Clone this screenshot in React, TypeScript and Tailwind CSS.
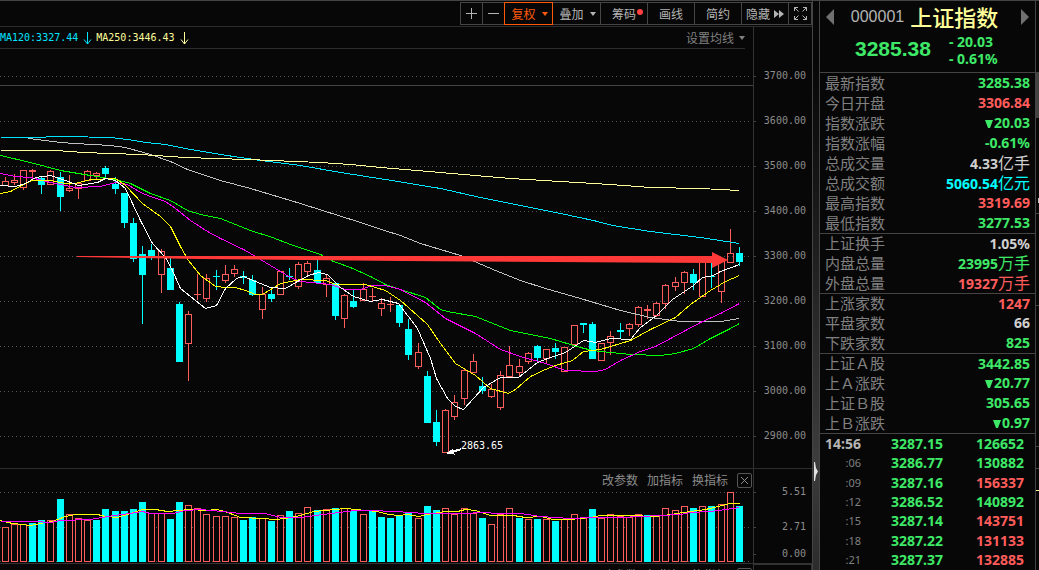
import type { ReactNode } from "react";
import clsx from "clsx";

// kind, high, body top, body bottom, low
type Candle = ["r" | "c", number, number, number, number];

const candles: Candle[] = [
  ["r", 177, 181, 185, 185], ["r", 174, 180, 182, 185], ["r", 170, 170, 187, 190],
  ["r", 169, 170, 171, 177], ["c", 177, 178, 185, 194], ["r", 170, 171, 184, 184],
  ["c", 172, 177, 197, 211], ["r", 175, 188, 190, 192], ["r", 183, 183, 188, 199],
  ["r", 170, 171, 180, 180], ["r", 172, 173, 175, 180], ["c", 166, 168, 174, 178],
  ["c", 177, 184, 189, 194], ["c", 193, 193, 223, 228], ["c", 218, 223, 259, 262],
  ["c", 246, 254, 275, 324], ["c", 244, 250, 257, 260], ["r", 249, 251, 274, 293],
  ["c", 258, 268, 290, 290], ["c", 302, 304, 362, 362], ["r", 311, 314, 343, 381],
  ["r", 274, 294, 294, 300], ["r", 274, 278, 298, 302], ["c", 270, 276, 277, 290],
  ["r", 265, 274, 280, 283], ["r", 265, 269, 273, 277], ["c", 271, 276, 278, 284],
  ["c", 275, 280, 295, 296], ["r", 287, 294, 309, 319], ["c", 288, 294, 299, 302],
  ["r", 271, 271, 294, 294], ["c", 268, 276, 277, 280], ["r", 262, 264, 286, 289],
  ["r", 261, 263, 271, 276], ["c", 260, 270, 283, 283], ["r", 275, 278, 284, 297],
  ["c", 282, 283, 316, 320], ["r", 294, 295, 318, 328], ["c", 290, 301, 307, 308],
  ["r", 283, 289, 300, 301], ["r", 288, 296, 296, 302], ["r", 298, 303, 308, 316],
  ["r", 297, 304, 304, 312], ["c", 305, 305, 323, 327], ["c", 319, 329, 355, 360],
  ["r", 343, 352, 366, 369], ["c", 371, 376, 423, 423], ["c", 410, 422, 442, 446],
  ["r", 409, 410, 452, 452], ["r", 395, 402, 416, 420], ["r", 368, 370, 398, 405],
  ["r", 354, 361, 372, 372], ["c", 377, 386, 391, 394], ["r", 384, 389, 396, 398],
  ["r", 371, 375, 407, 410], ["r", 346, 365, 376, 376], ["r", 359, 366, 372, 376],
  ["r", 352, 353, 361, 364], ["c", 345, 346, 358, 361], ["r", 349, 349, 358, 364],
  ["c", 343, 348, 352, 359], ["r", 347, 347, 371, 371], ["r", 325, 325, 344, 344],
  ["c", 323, 323, 325, 333], ["c", 322, 324, 359, 359], ["r", 343, 343, 360, 360],
  ["r", 331, 336, 342, 355], ["c", 323, 330, 332, 339], ["r", 323, 324, 328, 336],
  ["r", 306, 307, 324, 327], ["r", 305, 309, 310, 319], ["r", 302, 303, 315, 317],
  ["r", 284, 285, 303, 309], ["r", 277, 282, 286, 291], ["r", 271, 272, 282, 294],
  ["c", 269, 274, 283, 290], ["r", 260, 260, 296, 296], ["c", 262, 276, 277, 288],
  ["r", 260, 260, 291, 303], ["r", 229, 253, 262, 262], ["c", 247, 253, 262, 266],
];

const volumeTops = [
  527, 524, 524, 523, 520, 520, 499, 514, 518, 520, 520, 509, 511, 511, 509, 502, 513, 513, 519, 502,
  505, 508, 514, 516, 516, 517, 520, 517, 518, 521, 515, 511, 513, 507, 510, 509, 508, 508, 511, 514,
  510, 517, 518, 515, 513, 518, 506, 510, 508, 514, 508, 513, 518, 524, 514, 508, 518, 519, 519, 519,
  521, 519, 514, 518, 509, 518, 514, 516, 517, 514, 515, 516, 508, 510, 506, 508, 506, 506, 504, 492,
  506,
];
const volumeKinds = "rrrccrcrrrccccccrrccrrrrrrccrcrcrrcrcrcrcccccrccrrrrcrrrcrcrcrrrcrrrrrcrrrrcrcrrc";

const priceLines = [
  { color: "#c0c0c0", points: "28,138 60,142 75,143 110,145 125,147 150,154 170,161 187,169 220,180 250,188 300,203 360,222 384,230 400,235 420,243 460,255 495,270 520,280 545,288 580,298 600,304 620,310 650,317 680,321 720,321 739,318" },
  { color: "#00e5ff", points: "0,137 45,137 46,136 65,136 110,137 127,139 145,142 165,144 190,149 220,154 260,160 300,165 340,172 385,179 440,188 480,197 520,205 560,213 593,220 612,225 650,231 700,237 739,243" },
  { color: "#ffff9a", points: "0,150 55,150 83,152 110,153 140,154 185,157 247,159 320,162 350,164 380,167 440,172 510,178 560,181 610,184 650,187 700,188 739,190" },
  { color: "#00ff00", points: "0,155 30,162 60,170 90,175 115,179 130,183 150,193 170,200 187,210 200,214 220,218 250,230 272,237 290,244 320,254 333,261 350,267 370,276 385,284 400,289 425,297 440,309 447,311 475,316 510,330 550,338 580,347 592,350 610,352 630,354 660,355 675,353 693,348 710,338 730,328 739,323" },
  { color: "#ff00ff", points: "0,173 15,176 30,177 50,182 75,187 100,186 115,182 127,184 140,192 150,196 165,201 175,208 190,220 207,231 220,238 245,250 270,265 290,277 300,281 330,284 345,289 360,289 372,285 385,285 400,289 425,302 445,318 475,333 500,349 520,356 545,363 565,370 595,371 605,369 620,360 640,351 655,346 670,338 700,322 720,313 739,303" },
  { color: "#ffff00", points: "0,193 10,191 25,183 32,180 50,180 65,183 75,183 90,179 115,178 125,185 142,203 160,216 170,226 180,246 188,260 200,275 215,286 225,287 235,287 245,290 255,294 262,294 280,283 300,279 325,280 335,284 365,284 385,290 400,300 427,324 440,343 455,363 475,375 490,388 508,393 515,389 530,376 545,369 555,365 572,360 583,351 600,349 630,340 650,329 675,317 690,304 710,290 725,281 739,275" },
  { color: "#ffffff", points: "0,185 15,186 25,183 35,177 50,175 65,180 78,185 97,182 105,178 115,180 125,188 140,220 152,243 165,257 172,270 180,288 190,296 205,308 216,305 225,288 236,278 243,276 255,281 270,287 285,288 297,281 308,275 318,272 327,274 340,287 353,296 370,301 382,299 398,303 417,328 430,358 436,378 447,398 455,406 463,409 483,387 500,377 518,377 537,362 550,357 565,352 583,340 595,342 610,338 630,339 640,327 656,315 672,299 693,285 702,277 713,275 720,271 739,264" },
];

const volumeLines = [
  { color: "#ffff00", points: "0,520 7,522 13,523 30,525 40,523 52,521 65,516 75,514 97,514 105,516 117,517 130,513 142,509 155,509 167,511 178,510 190,509 205,510 217,509 227,512 240,517 262,518 275,519 285,518 300,515 313,511 325,510 345,508 365,510 377,511 388,514 398,515 407,514 418,516 432,513 445,511 457,511 465,509 475,510 490,515 513,515 525,517 540,516 553,519 570,519 590,517 600,515 630,515 655,516 670,514 690,511 705,509 730,503 739,503" },
  { color: "#ff00ff", points: "0,521 35,521 50,522 60,520 90,519 113,515 130,513 142,511 150,513 172,513 185,510 200,509 222,511 240,513 265,513 280,517 300,517 330,513 355,510 370,510 395,511 410,512 425,513 465,513 480,512 500,513 520,513 540,516 555,517 570,518 590,517 620,517 640,516 660,515 680,514 690,512 710,511 725,509 739,507" },
];

const prices = ["3700.00", "3600.00", "3500.00", "3400.00", "3300.00", "3200.00", "3100.00", "3000.00", "2900.00"];

const tone = {
  g: "text-[#3ee968]",
  r: "text-[#ff5c5c]",
  w: "text-[#d0d0d0]",
  c: "text-[#00ffff]",
};
type Tone = keyof typeof tone;

// label, number, tone, unit
const groups: [string, string, Tone, string?][][] = [
  [
    ["最新指数", "3285.38", "g"],
    ["今日开盘", "3306.84", "r"],
    ["指数涨跌", "▼20.03", "g"],
    ["指数涨幅", "-0.61%", "g"],
    ["总成交量", "4.33", "w", "亿手"],
    ["总成交额", "5060.54", "c", "亿元"],
    ["最高指数", "3319.69", "r"],
    ["最低指数", "3277.53", "g"],
  ],
  [
    ["上证换手", "1.05%", "w"],
    ["内盘总量", "23995", "g", "万手"],
    ["外盘总量", "19327", "r", "万手"],
  ],
  [
    ["上涨家数", "1247", "r"],
    ["平盘家数", "66", "w"],
    ["下跌家数", "825", "g"],
  ],
  [
    ["上证Ａ股", "3442.85", "g"],
    ["上Ａ涨跌", "▼20.77", "g"],
    ["上证Ｂ股", "305.65", "g"],
    ["上Ｂ涨跌", "▼0.97", "g"],
  ],
];

const ticks: [string, string, string, Tone][] = [
  ["14:56", "3287.15", "126652", "g"],
  [":06", "3286.77", "130882", "g"],
  [":09", "3287.16", "156337", "r"],
  [":12", "3286.52", "140892", "g"],
  [":15", "3287.14", "143751", "r"],
  [":18", "3287.22", "131133", "r"],
  [":21", "3287.37", "132885", "r"],
];

const slotX = (i: number) => Math.round(4.5 + 9.18 * i);

function Caret() {
  return (
    <svg width="6" height="4" viewBox="0 0 6 4" fill="currentColor" aria-hidden="true">
      <path d="M0 0h6L3 4z" />
    </svg>
  );
}

function DownArrow() {
  return (
    <svg width="9" height="14" viewBox="0 0 9 14" fill="none" stroke="currentColor" aria-hidden="true">
      <path d="M4.5 1v12M1 8.500l3.500 4.500L8 8.500" />
    </svg>
  );
}

function ToolButton({ label, active, className, children }: { label?: string; active?: boolean; className: string; children?: ReactNode }) {
  return (
    <button
      aria-label={label}
      className={clsx(
        "relative -ml-px flex h-[23px] items-center justify-center border text-xs",
        active ? "z-10 border-[#ff5a0a] text-[#ff5a0a]" : "border-[#454545] text-[#b4b4b4]",
        className
      )}
    >
      {children}
    </button>
  );
}

function Toolbar() {
  return (
    <div className="flex h-[25px] shrink-0 justify-end pt-px">
      <ToolButton label="放大" className="w-[23px]">
        <svg width="11" height="11" viewBox="0 0 11 11" stroke="currentColor"><path d="M0 5.500h11M5.500 0v11" /></svg>
      </ToolButton>
      <ToolButton label="缩小" className="w-[23px]">
        <svg width="11" height="11" viewBox="0 0 11 11" stroke="currentColor"><path d="M0 5.500h11" /></svg>
      </ToolButton>
      <ToolButton active className="w-[49px] gap-1.5 pl-0.5">复权<Caret /></ToolButton>
      <ToolButton className="w-[49px] gap-1.5 pl-0.5">叠加<Caret /></ToolButton>
      <ToolButton className="w-12">
        筹码
        <span className="absolute right-1 top-1.5 size-1.5 rounded-full bg-[#ff4040]" />
      </ToolButton>
      <ToolButton className="w-12">画线</ToolButton>
      <ToolButton className="w-12">简约</ToolButton>
      <ToolButton className="w-12 gap-1">
        隐藏
        <svg width="10" height="8" viewBox="0 0 10 8" fill="currentColor" aria-hidden="true"><path d="M0 0l5 4-5 4zM5 0l5 4-5 4z" /></svg>
      </ToolButton>
      <ToolButton label="全屏" className="w-6">
        <svg width="13" height="13" viewBox="0 0 13 13" fill="none" stroke="currentColor">
          <path d="M.5 4V.5H4M.5.5l4 4M9 .5h3.500V4M12.500.5l-4 4M.5 9v3.500H4M.5 12.500l4-4M9 12.500h3.500V9M12.500 12.500l-4-4" />
        </svg>
      </ToolButton>
    </div>
  );
}

function Grid({ rows }: { rows: number[] }) {
  return (
    <>
      {rows.map((y) => (
        <line key={y} x1="0" x2="751" y1={y + 0.5} y2={y + 0.5} stroke="#555" strokeDasharray="1 3" />
      ))}
    </>
  );
}

function MovingAverages({ lines }: { lines: { color: string; points: string }[] }) {
  return (
    <g transform="translate(0.5 0.5)" fill="none">
      {lines.map((l) => (
        <polyline key={l.color} points={l.points} stroke={l.color} />
      ))}
    </g>
  );
}

function PriceChart() {
  return (
    <svg viewBox="0 49 753 419" preserveAspectRatio="none" shapeRendering="crispEdges" className="block h-[419px] w-full" role="img" aria-label="上证指数 K线">
      <Grid rows={[76, 121, 166, 211, 256, 301, 346, 391, 436]} />
      <rect x="0" y="85" width="753" height="1" fill="#444" />
      {candles.map(([kind, high, top, bottom, low], i) => {
        const x = slotX(i);
        if (kind === "c") {
          return (
            <g key={i} fill="#00ffff">
              <rect x={x} y={high} width="1" height={low - high} />
              <rect x={x - 3} y={top} width="7" height={bottom - top} />
            </g>
          );
        }
        return (
          <g key={i}>
            <rect x={x} y={high} width="1" height={top - high} fill="#ff5c5c" />
            <rect x={x} y={bottom} width="1" height={low - bottom} fill="#ff5c5c" />
            {bottom - top > 1 ? (
              <rect x={x - 2.5} y={top + 0.5} width="6" height={bottom - top} fill="none" stroke="#ff5c5c" />
            ) : (
              <rect x={x - 3} y={top} width="7" height={bottom - top + 1} fill="#ff5c5c" />
            )}
          </g>
        );
      })}
      <MovingAverages lines={priceLines} />
      <path d="M77 256H712V252L728 260 712 268V263L400 261 200 259 77 257z" fill="#ff3838" shapeRendering="auto" />
      <path d="M447 453l5-3v1l8-2v1l-7 2 1 2z" fill="#fff" stroke="#fff" />
      <text x="461" y="449" fill="#fff" className="font-['DejaVu_Sans_Mono',monospace] text-[10px]">2863.65</text>
    </svg>
  );
}

function VolumeChart() {
  return (
    <svg viewBox="0 491 753 72" preserveAspectRatio="none" shapeRendering="crispEdges" className="block h-[72px] w-full" role="img" aria-label="成交量">
      <Grid rows={[492, 527, 561]} />
      {volumeTops.map((top, i) =>
        volumeKinds[i] === "c" ? (
          <rect key={i} x={slotX(i) - 3} y={top} width="7" height={562 - top} fill="#00ffff" />
        ) : (
          <rect key={i} x={slotX(i) - 2.5} y={top + 0.5} width="6" height={561 - top} fill="#070707" stroke="#ff5c5c" />
        )
      )}
      <MovingAverages lines={volumeLines} />
    </svg>
  );
}

function IndicatorHeader() {
  return (
    <div className="flex h-[22px] items-center justify-end gap-[9px] pr-px text-xs text-[#8c8c8c]">
      <button>改参数</button>
      <button>加指标</button>
      <button>换指标</button>
      <button aria-label="关闭" className="flex size-[15px] items-center justify-center rounded-xs border border-[#555]">
        <svg width="7" height="7" viewBox="0 0 7 7" stroke="currentColor"><path d="M0 0l7 7M7 0L0 7" /></svg>
      </button>
    </div>
  );
}

function AxisLabel({ children }: { children: ReactNode }) {
  return (
    <div className="flex h-4 items-center justify-between pr-1.5 font-['DejaVu_Sans_Mono',monospace] text-[10px] leading-4 text-[#8c8c8c]">
      <span className="h-px w-0.5 bg-[#444]" />
      {children}
    </div>
  );
}

function ChartPanel() {
  return (
    <main className="flex min-w-0 flex-1 flex-col">
      <Toolbar />
      <section className="grid shrink-0 grid-cols-[minmax(0,1fr)_58px] border-t border-[#2c2c2c]">
        <div className="border-r border-[#333]">
          <div className="mr-2 flex h-[22px] items-center border-b border-[#2c2c2c] font-['DejaVu_Sans_Mono',monospace] text-[10px] whitespace-nowrap">
            <span className="flex items-center gap-[5px] text-[#00e5ff]">MA120:3327.44<DownArrow /></span>
            <span className="ml-1 flex items-center gap-[5px] text-[#ffff9a]">MA250:3446.43<DownArrow /></span>
            <button className="ml-auto flex items-center gap-[5px] font-['Noto_Sans_CJK_SC',sans-serif] text-xs text-[#808080]">
              设置均线<Caret />
            </button>
          </div>
          <PriceChart />
        </div>
        <div className="flex flex-col gap-[29px] pt-[41px]">
          {prices.map((p) => (
            <AxisLabel key={p}>{p}</AxisLabel>
          ))}
        </div>
      </section>
      <section className="grid shrink-0 grid-cols-[minmax(0,1fr)_58px] border-t border-[#2c2c2c]">
        <div className="border-r border-[#333]">
          <IndicatorHeader />
          <VolumeChart />
        </div>
        <div className="flex flex-col pt-[15px]">
          <AxisLabel>5.51</AxisLabel>
          <div className="mt-[19px]"><AxisLabel>2.71</AxisLabel></div>
          <div className="mt-[11px]"><AxisLabel>0.00</AxisLabel></div>
        </div>
      </section>
      <section className="grid flex-1 grid-cols-[minmax(0,1fr)_58px] border-t border-[#333]">
        <div className="border-r border-[#333]">
          <IndicatorHeader />
        </div>
        <div className="border-t border-r border-[#333]" />
      </section>
    </main>
  );
}

function Splitter() {
  return (
    <div className="relative w-[7px] shrink-0 border-l border-[#444] bg-linear-to-b from-[#070707] from-10% via-[#3c3c3c] via-80% to-[#2c2c2c]">
      <button aria-label="收起侧栏" className="absolute left-px top-[461px]">
        <svg width="4" height="19" viewBox="0 0 4 19" fill="#e0e0e0" className="block"><path d="M0 0h1l1 6 2 3.500L2 13l-1 6H0z" /></svg>
      </button>
    </div>
  );
}

function QuoteHeader() {
  return (
    <header className="h-[71px] px-1.5">
      <div className="flex h-8 items-center justify-between">
        <button aria-label="上一个">
          <svg width="8" height="16" viewBox="0 0 8 16" fill="#707070"><path d="M8 0v16L0 8z" /></svg>
        </button>
        <h1 className="mr-1.5 flex items-center gap-1.5 whitespace-nowrap">
          <span className="font-['Liberation_Sans',sans-serif] text-base text-[#b4b4b4]">000001</span>
          <span className="pb-0.5 text-[22px] leading-7 font-medium text-[#ffff9a]">上证指数</span>
        </h1>
        <button aria-label="下一个">
          <svg width="8" height="16" viewBox="0 0 8 16" fill="#707070"><path d="M0 0v16l8-8z" /></svg>
        </button>
      </div>
      <div className="flex items-center gap-[18px] pl-[29px] font-bold text-[#3ee968]">
        <span className="pb-0.5 font-['Liberation_Sans',sans-serif] text-[21px] leading-6">3285.38</span>
        <div className="font-['Noto_Sans',sans-serif] text-sm leading-[17px]">
          <p>- 20.03</p>
          <p>- 0.61%</p>
        </div>
      </div>
    </header>
  );
}

function Sidebar() {
  return (
    <aside className="flex w-[217px] shrink-0 flex-col border-x border-[#444]">
      <QuoteHeader />
      <table className="w-full shrink-0 border-separate border-spacing-0 border-t border-[#444]">
        {groups.map((rows, g) => (
          <tbody key={g}>
            {rows.map(([label, value, color, unit], i) => {
              const line = g > 0 && i === 0 && "border-t border-[#444]";
              return (
                <tr key={label}>
                  <th scope="row" className={clsx("h-5 p-0 pb-0.5 pl-[5px] text-left text-[15px] leading-[17px] font-normal text-[#808080]", line)}>{label}</th>
                  <td className={clsx("h-5 p-0 pr-[5px] text-right font-['Noto_Sans','Noto_Sans_CJK_SC',sans-serif] text-sm leading-[18px] font-bold whitespace-nowrap", tone[color], line)}>
                    {value.startsWith("▼") && <span className="mr-px inline-block"><svg width="8" height="8" viewBox="0 0 8 8" fill="currentColor" role="img" aria-label="跌"><path d="M0 0h8L5 8H3z" /></svg></span>}
                    {value.replace("▼", "")}
                    {unit && <span className="text-base leading-[18px] font-normal">{unit}</span>}
                  </td>
                </tr>
              );
            })}
          </tbody>
        ))}
      </table>
      <div className="flex-1 border-t border-[#444]">
        <table className="h-full w-full table-fixed border-separate border-spacing-0 font-['Noto_Sans',sans-serif] text-sm leading-[18px] font-bold">
          <tbody>
            {ticks.map(([time, price, volume, color], i) => (
              <tr key={time}>
                <td className={clsx("w-[41px] p-0 text-right", i === 0 ? "text-[#b4b4b4]" : "text-[11px] font-normal text-[#808080]")}>{time}</td>
                <td className="w-[82px] p-0 text-right text-[#3ee968]">{price}</td>
                <td className={clsx("p-0 pr-[11px] text-right", tone[color])}>{volume}</td>
              </tr>
            ))}
          </tbody>
        </table>
      </div>
    </aside>
  );
}

function EdgeStrip() {
  return (
    <div className="w-[3px] shrink-0 overflow-hidden">
      <svg width="3" height="569" viewBox="0 1 3 569" shapeRendering="crispEdges" className="block" aria-hidden="true">
        <rect y="72" width="3" height="46" fill="#444" />
        <rect y="198" x="2" width="1" height="5" fill="#c0c0c0" />
        <path d="M0 213.500h3M0 305.500h3M0 446.500h3M0 468.500h3" stroke="#444" />
        <path d="M0 490.500h3" stroke="#ffff9a" />
      </svg>
    </div>
  );
}

export default function App() {
  return (
    <div className="flex h-screen overflow-hidden border-t border-[#444] bg-[#070707] font-['Noto_Sans_CJK_SC',sans-serif]">
      <ChartPanel />
      <Splitter />
      <Sidebar />
      <EdgeStrip />
    </div>
  );
}
